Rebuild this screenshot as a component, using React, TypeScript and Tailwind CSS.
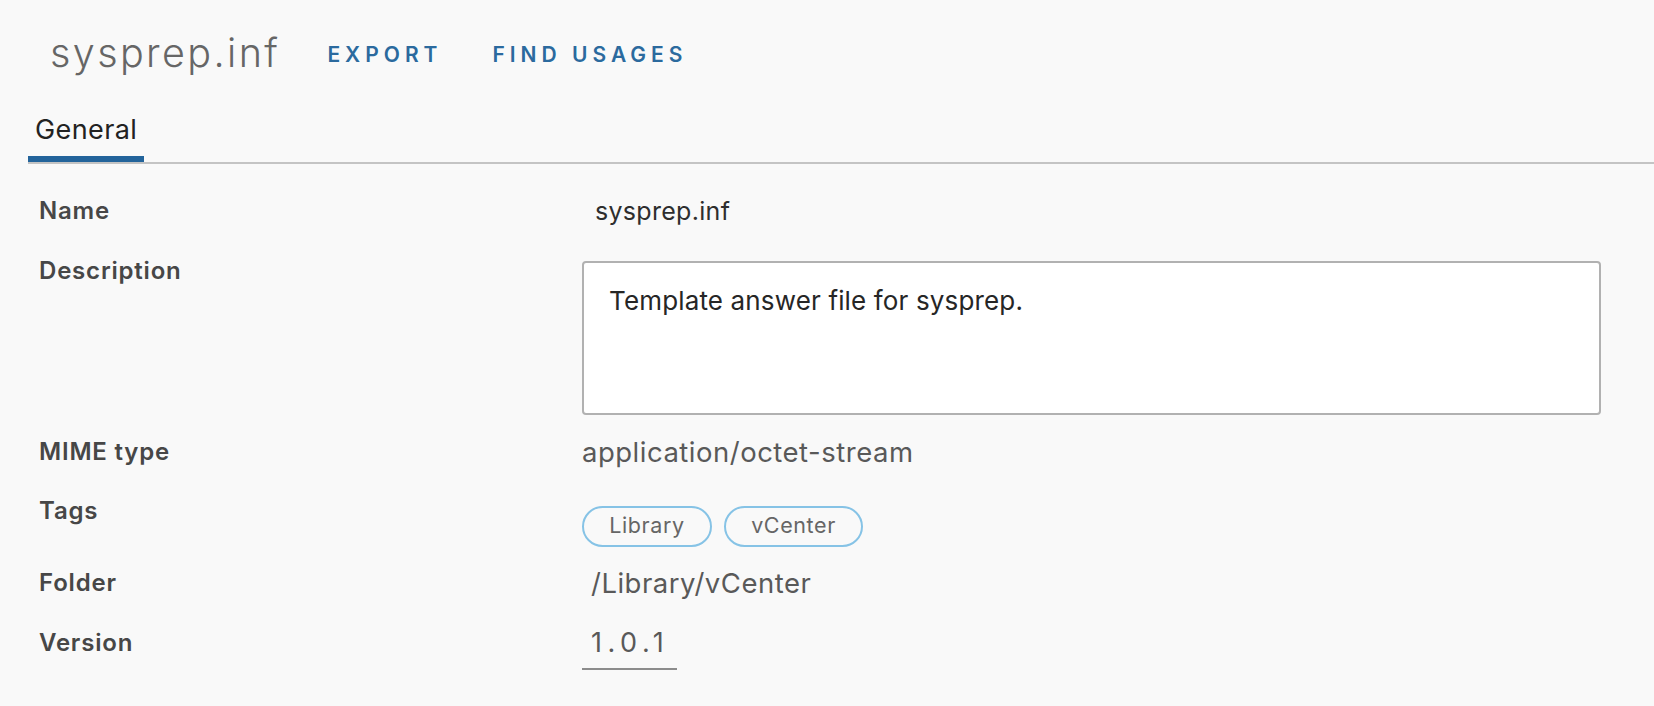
import React from "react";

const label =
  "w-[543px] shrink-0 text-[24px] leading-[32px] font-semibold tracking-[0.8px] text-[#474747]";
const value = "text-[27.5px] leading-[32px] tracking-[0.5px] text-[#595959]";

function Pill({ text, w }: { text: string; w: string }) {
  return (
    <div
      className={`${w} h-[41px] rounded-full border-2 border-[#86c3e6] flex items-center justify-center pb-[3px] text-[21.5px] leading-[28px] tracking-[0.6px] text-[#666666]`}
    >
      {text}
    </div>
  );
}

export default function App() {
  return (
    <div className="min-h-screen bg-[#f9f9f9] font-[family-name:Inter,sans-serif] overflow-hidden">
      {/* Header */}
      <div className="flex items-center pt-[29px] pl-[50px]">
        <h1 className="text-[39.5px] leading-[48px] font-light tracking-[2.4px] text-[#666666]">
          sysprep.inf
        </h1>
        <button className="ml-[47px] mt-[3px] text-[21px] leading-[24px] font-semibold tracking-[5px] text-[#2b6a9e]">
          EXPORT
        </button>
        <button className="ml-[50px] mt-[3px] text-[21px] leading-[24px] font-semibold tracking-[5px] text-[#2b6a9e]">
          FIND USAGES
        </button>
      </div>

      {/* Tabs */}
      <div className="ml-[28px] mt-[37px] flex border-b-2 border-[#c4c4c4]">
        <div className="px-[7px] pb-[10px] border-b-[6px] border-[#23649b] text-[27px] leading-[32px] tracking-[0.4px] text-[#222222]">
          General
        </div>
      </div>

      {/* Properties */}
      <div className="pl-[39px]">
        <div className="flex mt-[31px]">
          <div className={label}>Name</div>
          <div className="pl-[13px] text-[25px] leading-[32px] tracking-[0.3px] text-[#2e2e2e]">
            sysprep.inf
          </div>
        </div>

        <div className="flex mt-[28px]">
          <div className={label}>Description</div>
          <div className="mt-[6px] w-[1019px] h-[154px] bg-white border-2 border-[#b1b1b1] rounded-[4px] pl-[25px] pt-[22px] text-[26px] leading-[32px] tracking-[0.15px] text-[#262626]">
            Template answer file for sysprep.
          </div>
        </div>

        <div className="flex mt-[21px]">
          <div className={label}>MIME type</div>
          <div className={value}>application/octet-stream</div>
        </div>

        <div className="flex mt-[27px]">
          <div className={label}>Tags</div>
          <div className="mt-[11px] flex gap-[12px]">
            <Pill text="Library" w="w-[130px]" />
            <Pill text="vCenter" w="w-[139px]" />
          </div>
        </div>

        <div className="flex mt-[20px]">
          <div className={label}>Folder</div>
          <div className={`pl-[9px] ${value}`}>/Library/vCenter</div>
        </div>

        <div className="flex mt-[28px]">
          <div className={label}>Version</div>
          <div className="w-[95px] pl-[9px] pb-[9px] border-b-2 border-[#8c8c8c] text-[27px] leading-[32px] tracking-[5.5px] text-[#595959]">
            1.0.1
          </div>
        </div>
      </div>
    </div>
  );
}
